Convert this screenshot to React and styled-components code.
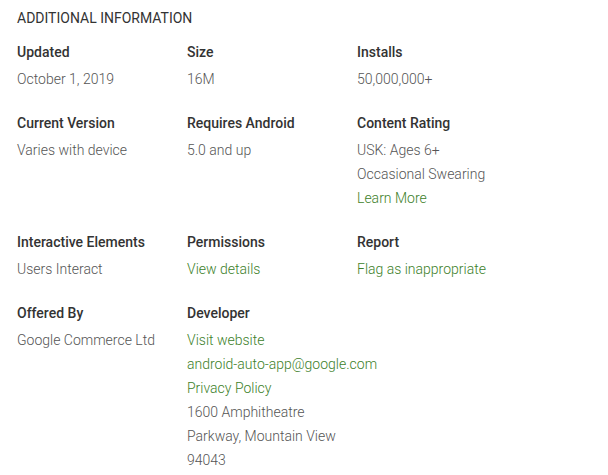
import styled, { createGlobalStyle } from 'styled-components';

const GlobalStyle = createGlobalStyle`
    body {
        margin: 0;
        background: #fff;
        font-family: Roboto, "Liberation Sans", Arial, sans-serif;
    }
`;

const info = [
    { title: 'Updated', lines: [{ text: 'October 1, 2019' }] },
    { title: 'Size', lines: [{ text: '16M' }] },
    { title: 'Installs', lines: [{ text: '50,000,000+' }] },
    { title: 'Current Version', lines: [{ text: 'Varies with device' }] },
    { title: 'Requires Android', lines: [{ text: '5.0 and up' }] },
    {
        title: 'Content Rating',
        lines: [
            { text: 'USK: Ages 6+' },
            { text: 'Occasional Swearing' },
            { text: 'Learn More', link: true },
        ],
    },
    { title: 'Interactive Elements', lines: [{ text: 'Users Interact' }] },
    { title: 'Permissions', lines: [{ text: 'View details', link: true }] },
    { title: 'Report', lines: [{ text: 'Flag as inappropriate', link: true }] },
    { title: 'Offered By', lines: [{ text: 'Google Commerce Ltd' }] },
    {
        title: 'Developer',
        lines: [
            { text: 'Visit website', link: true },
            { text: 'android-auto-app@google.com', link: true },
            { text: 'Privacy Policy', link: true },
            { text: '1600 Amphitheatre' },
            { text: 'Parkway, Mountain View' },
            { text: '94043' },
        ],
    },
];

export default function App() {
    return (
        <>
            <GlobalStyle />
            <Section>
                <Heading>Additional Information</Heading>
                <Grid>
                    {info.map((item) => (
                        <Item key={item.title}>
                            <Title>{item.title}</Title>
                            <Value>
                                {item.lines.map((line) =>
                                    line.link
                                        ? <Link key={line.text} href="#">{line.text}</Link>
                                        : <Line key={line.text}>{line.text}</Line>
                                )}
                            </Value>
                        </Item>
                    ))}
                </Grid>
            </Section>
        </>
    );
}

const Section = styled.section`
    padding: 6px 17px 0;
`;

const Heading = styled.h2`
    margin: 0 0 10px;
    font-size: 14px;
    font-weight: 400;
    line-height: 24px;
    color: #333;
    text-transform: uppercase;
`;

const Grid = styled.div`
    display: grid;
    grid-template-columns: repeat(3, 170px);
    row-gap: 20px;
`;

const Item = styled.div`
    display: flex;
    flex-direction: column;
`;

const Title = styled.div`
    font-size: 14px;
    font-weight: 500;
    line-height: 24px;
    color: #333;
    margin-bottom: 3px;
`;

const Value = styled.div`
    display: flex;
    flex-direction: column;
    align-items: flex-start;
    font-size: 14px;
    font-weight: 300;
    line-height: 24px;
    color: #555;
    white-space: nowrap;
`;

const Line = styled.span``;

const Link = styled.a`
    color: #3d7f2a;
    text-decoration: none;
`;
